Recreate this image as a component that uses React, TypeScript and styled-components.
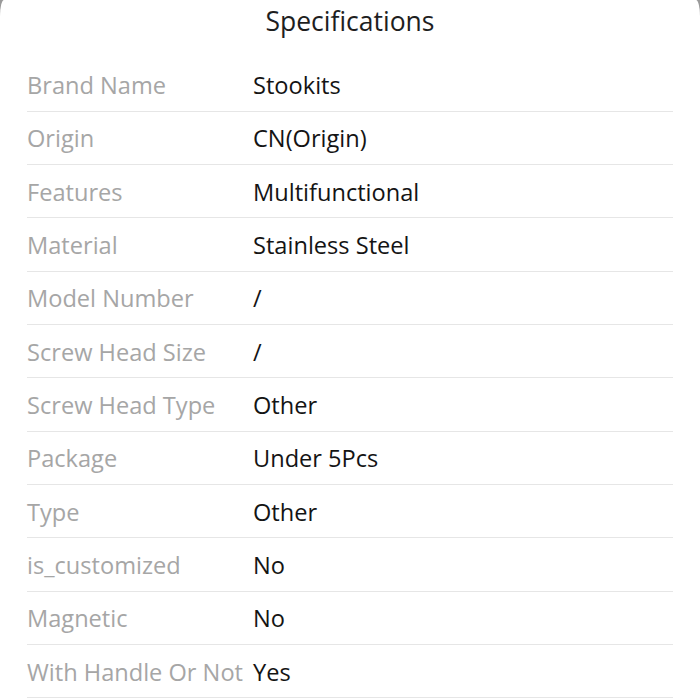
import React from "react";
import styled, { createGlobalStyle } from "styled-components";

const Global = createGlobalStyle`
  html, body { margin: 0; padding: 0; background: #9a9a9a; }
  body { font-family: "Open Sans", "Noto Sans", sans-serif; }
`;

const Sheet = styled.div`
  width: 700px;
  height: 700px;
  background: #ffffff;
  border-radius: 4px 4px 0 0 / 16px 16px 0 0;
  overflow: hidden;
  box-sizing: border-box;
  padding: 0 27px;
`;

const Title = styled.h1`
  margin: 0;
  height: 58.3px;
  padding-top: 2px;
  box-sizing: border-box;
  text-align: center;
  font-size: 26.5px;
  font-weight: 400;
  line-height: 38px;
  color: #1e1e1e;
`;

const Table = styled.div`
  display: flex;
  flex-direction: column;
`;

const Row = styled.div`
  display: grid;
  grid-template-columns: 226px 1fr;
  align-items: center;
  height: 53.33px;
  padding-top: 1px;
  box-sizing: border-box;
  border-bottom: 1px solid #e6e6e6;
  font-size: 23.6px;
`;

const Label = styled.span`
  color: #a6a6a6;
  white-space: nowrap;
`;

const Value = styled.span`
  color: #141414;
  white-space: nowrap;
`;

const specs: [string, string][] = [
  ["Brand Name", "Stookits"],
  ["Origin", "CN(Origin)"],
  ["Features", "Multifunctional"],
  ["Material", "Stainless Steel"],
  ["Model Number", "/"],
  ["Screw Head Size", "/"],
  ["Screw Head Type", "Other"],
  ["Package", "Under 5Pcs"],
  ["Type", "Other"],
  ["is_customized", "No"],
  ["Magnetic", "No"],
  ["With Handle Or Not", "Yes"],
];

export default function App() {
  return (
    <>
      <Global />
      <Sheet>
        <Title>Specifications</Title>
        <Table>
          {specs.map(([k, v]) => (
            <Row key={k}>
              <Label>{k}</Label>
              <Value>{v}</Value>
            </Row>
          ))}
        </Table>
      </Sheet>
    </>
  );
}
